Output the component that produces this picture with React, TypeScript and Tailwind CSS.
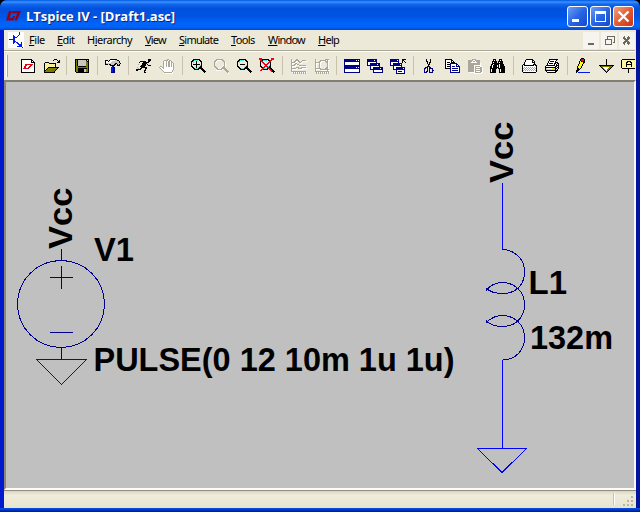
import React from "react";

const palette: Record<string, string> = {
  k: "#000000", w: "#ffffff", r: "#e80010", o: "#7b7b00", y: "#ffff00",
  l: "#fff8a0", n: "#000084", g: "#aca899", b: "#0018e8", c: "#42e8f0", s: "#c8c8c0",
};

const icons: Record<string, string[]> = {
  transistor: [
    "wwwwwwwwwwwbwwww", "wwwwwwwwwwwbwwww", "wwwwwwwwwwwbwwww", "wwwwwbwwwwbwwwww",
    "wwwwwbbwwbwwwwww", "wwwwwbbbbwwwwwww", "wwwwwbbwwwwwwwww", "wbbbbbbwwwwwwwww",
    "wwwwwbbwwwwwwwww", "wwwwwbbbwwwwwwww", "wwwwwbbwbbwwwbww", "wwwwwbwwwbbwwbww",
    "wwwwwwwwwwbbbbww", "wwwwwwwwwwwbbbww", "wwwwwwwwwbbbbbww", "wwwwwwwwwwwwwwbw",
  ],
  new: [
    "................", ".kkkkkkkkkkk....", ".kwwwwwwwwwkk...", ".kwwwwwwwwwkwk..",
    ".kwwwwwwwwwkkkk.", ".kwwwwwwwwwwwwk.", ".kwwwrrrrrrrrwk.", ".kwwwrrwwwrrwwk.",
    ".kwwrrwwwrrwwwk.", ".kwwrrwwrrwwwwk.", ".kwrrrrrrwwwwwk.", ".kwwwwwwwwwwwwk.",
    ".kwwwwwwwwwwwwk.", ".kwwwwwwwwwwwwk.", ".kkkkkkkkkkkkkk.", "................",
  ],
  open: [
    "................", "...........kkk..", "..........k...k.k", "...............kk",
    "..kkkk........kkk", ".klylykkkkkkk...", ".kylylylylylk...", ".klylylylylyk...",
    ".kylylylylylk...", ".klylkkkkkkkkkkk.", ".kylkoooooooook.", ".klkoooooooook..",
    ".kkoooooooook...", ".koooooooook....", ".kkkkkkkkkkk....", "................",
  ],
  save: [
    "................", ".kkkkkkkkkkkkkk.", ".kokssssssssksk.", ".kokssssssssokk.",
    ".kokssssssssook.", ".kokssssssssook.", ".kokssssssssook.", ".kokssssssssook.",
    ".kookkkkkkkkook.", ".kooooooooooook.", ".kookkkkkkkkkok.", ".kookkkkkkssook.",
    ".kookkkkkkssook.", ".kookkkkkkssook.", "..kkkkkkkkkkkkk.", "................",
  ],
  hammer: [
    "................", ".....kkkkkkk....", "kkk.kwwwwwsskk..", "kwwkwwwsssssssk.",
    "kwwwwwssssssssk.", "kssssssssskksssk", "kkkskkssskk.ksk.", ".....kkkkk..kkk.",
    ".......nn.......", "......bbnn......", "......bbnn......", "......bbnn......",
    "......bbnn......", "......bbnn......", "......nnnn......", "................",
  ],
  run: [
    "................", "............kkk.", "............kkk.", "....kkkkkk..kk..",
    "...k...kkkkkk...", "......kkkkk.....", "..g...kkkk.k....", ".....kkkkk..kkk.",
    "....kkkkk.......", ".g...kkkkkk.....", "..g.kk...kk.....", "kkkkk....k......",
    "kk......kk......", "........k.......", "........kk......", "................",
  ],
  hand: [
    "................", "........gg......", ".....ggggwgg....", "....gwwgwggwg...",
    "....gwwgwggwgg..", "....gwwgwggwgwg.", "....gwwgwggwgwg.", "....gwwgwggwgwg.",
    ".gg.gwwgwggwgwg.", "gwwggwwwwwwwwwg.", ".gwwgwwwwwwwwwg.", "..gwwwwwwwwwwwg.",
    "...gwwwwwwwwwg..", "....gwwwwwwwwg..", ".....ggggggggw..", "......wwwwwwww..",
  ],
  tile: [
    "................", "nnnnnnnnnnnnnnnn", "nnnnnnnnnnnnwnwn", "nnnnnnnnnnnnnnnn",
    "nwwwwwwwwwwwwwwn", "nwwwwwwwwwwwwwwn", "nwwwwwwwwwwwwwwn", "nnnnnnnnnnnnnnnn",
    "nnnnnnnnnnnnnnnn", "nnnnnnnnnnnnwnwn", "nnnnnnnnnnnnnnnn", "nwwwwwwwwwwwwwwn",
    "nwwwwwwwwwwwwwwn", "nwwwwwwwwwwwwwwn", "nnnnnnnnnnnnnnnn", "................",
  ],
  cascade: [
    "................", "nnnnnnnnnn......", "nnnnnnnwnn......", "nnnnnnnnnn......",
    "nwwwwwwwwn......", "nwwnnnnnnnnnn...", "nwwnnnnnnnwnn...", "nnnnnnnnnnnnn...",
    "...nwwwwwwwwn...", "...nwwnnnnnnnnnn", "...nwwnnnnnnnwnn", "...nnnnnnnnnnnnn",
    "......nwwwwwwwwn", "......nwwwwwwwwn", "......nnnnnnnnnn", "................",
  ],
  closeall: [
    "................", "nnnnnnnnn...kkkk", "nnnnnnnwn...kk..", "nnnnnnnnn...k.k.",
    "nwwwwwwwn...k..k", "nwwnnnnnnnnn....", "nwwnnnnnnnwn....", "nnnnnnnnnnnn....",
    "...nwwwwwwwn....", "...nwwnnnnnnnnn.", "...nwwnnnnnnnwn.", "...nnnnnnnnnnnn.",
    "......nwwwwwwwn.", "......nwnnnnwwn.", "......nwwwwwwwn.", "......nnnnnnnnn.",
  ],
  cut: [
    "................", ".....k...k......", ".....k...k......", ".....kk..k......",
    "......k.kk......", "......k.k.......", ".......kk.......", ".......k........",
    "......nkn.......", "....nnn.nn......", "...nn.n.nnnn....", "...n..n.n..n....",
    "...n..n.n..nn...", "...n.nn.n..n....", "...nnn..nnnn....", "................",
  ],
  copy: [
    "................", ".kkkkkkk........", ".kwwwwwkk.......", ".kwwwwwkwk......",
    ".kwkkkwkkkk.....", ".kwwwwnnnnnnn...", ".kwkkknwwwwwnn..", ".kwwwwnwwwwwnwn.",
    ".kwkkknwnnnwnnnn", ".kwwwwnwwwwwwwwn", ".kkkkknwnnnnnnwn", "......nwwwwwwwwn",
    "......nwnnnnnnwn", "......nwwwwwwwwn", "......nnnnnnnnnn", "................",
  ],
  paste: [
    "................", ".....gggg.......", ".gggggwwggggg...", ".ggggwggwgggg...",
    ".gggwwwwwwggg...", ".ggggggggggggw..", ".ggggggggggggw..", ".ggggggwwwwwww..",
    ".ggggggwgggggww.", ".ggggggwgwwwwggw", ".ggggggwgggggggw", ".ggggggwgwwwwggw",
    ".ggggggwgggggggw", ".ggggggwgwwwwggw", "..wwwwwwggggggww", ".......wwwwwwww.",
  ],
  find: [
    "................", "...kkk...kkk....", "...kwk...kwk....", "..kkkkk.kkkkk...",
    "..kwkkk.kwkkk...", "..kkkkkkkkkkk...", ".kkwkkkkkwkkkk..", ".kwkkkkwkwkkkk..",
    "kkwkkkkwkwkkkkk.", "kkwkkkkkkwkkkkk.", "kkkkkkk.kkkkkkk.", "kwkkkk...kwkkkk.",
    "kwkkkk...kwkkkk.", "kwkkkk...kwkkkk.", "kkkkkk...kkkkkk.", "................",
  ],
  setup: [
    "................", ".....kkkkkkk....", "....kwwwwwwkk...", "....kwwwwwwkwk..",
    "...kwwwwwwwkkk..", "...kwwwwwwwwwk..", "..kkwwwwwwwwkkk.", ".kwkkkkkkkkkkwkk",
    ".kwwwwwwwwwwwwwk", ".kwgwgwgwgwgwgwk", ".kgwgwgwgwgwgwgk", ".kwgwgwgwgwgwgwk",
    ".kgwgwgwgwgwgwgk", ".kwwwwwwwwwwwwwk", "..kkkkkkkkkkkkk.", "................",
  ],
  print: [
    "................", ".....kkkkkkkkk..", ".....kwwwwwwk...", "....kwkkkkwk....",
    "....kwwwwwwkkk..", "...kwkkkkwkkwkk.", "...kwwwwwwkwkwk.", "..kkkkkkkkkwkkk.",
    ".kwwwwwwwwwkkwk.", ".kkkkkkkkkkkwkk.", ".kswwwwwyyskkwk.", ".kssssssssskwk..",
    ".kkkkkkkkkkkkk..", "..kwwwwwwwwkk...", "...kkkkkkkkk....", "................",
  ],
  pencil: [
    "......kkk.......", ".....krrrk......", ".....krrrk......", "....kykrkk......",
    "....kyyykk......", "....kyyyk.......", "...kyyyk........", "...kyyyk........",
    "..kyyyk.........", "..kyyyk.........", "..kkyk..........", "..kkk...........",
    ".kkk............", ".kk.............", ".k.bbbbbbbbbbbb.", "................",
  ],
  ground: [
    "................", "........k.......", "........k.......", "........k.......",
    "........k.......", "........k.......", "........k.......", ".kkkkkkkkkkkkkkk",
    "..koooooooooook.", "...kowwwwwwook..", "....kowwwwook...", ".....kowwook....",
    "......kowok.....", ".......kok......", "........k.......", "................",
  ],
  label: [
    "................", ".kkkkkkkkkkkkkkk.", "kllllllllllllllk", "klllllkkkkllllllk",
    "kllllkkllkkllllk", "kllllkllllkllllk", "kllllkkkkkkllllk", "kllllkllllkllllk",
    "kllllkllllkllllk", "kllllllllllllllk", ".kkkkkkkkkkkkkkk", ".......k........",
    ".......k........", ".......k........", ".......k........", "................",
  ],
};

function PixelIcon({ name, width = 17 }: { name: string; width?: number }) {
  return (
    <svg width={width} height="16" viewBox={`0 0 ${width} 16`} shapeRendering="crispEdges" className="block shrink-0">
      {icons[name].map((row, y) =>
        row.split("").map((p, x) =>
          p === "." ? null : <rect key={`${x}-${y}`} x={x} y={y} width="1" height="1" fill={palette[p]} />,
        ),
      )}
    </svg>
  );
}

function Lens({ kind }: { kind: "in" | "pan" | "out" | "fit" }) {
  const off = kind === "pan";
  const ink = off ? "#aca899" : "#000";
  return (
    <svg width="17" height="16" viewBox="0 0 17 16" shapeRendering="crispEdges" className="block shrink-0" fill="none">
      {off && <path d="M3 12l4 1 4-3 5 6M12 4v5" stroke="#fff" />}
      <path d="M4.5 .5h4l3 3v4l-3 3h-4l-3-3v-4z" stroke={ink} transform="translate(0 .5)" />
      <path d="M3 5v-1l2-2h3" stroke={off ? "#fff" : "#42e8f0"} />
      <path d="M10 7v1l-2 2H5" stroke={off ? "#fff" : "#42e8f0"} />
      <path d="M10.5 9.5l5 5" stroke={ink} strokeWidth="2.4" />
      {kind === "in" && <path d="M3 6.5h7M6.5 3v7" stroke="#000" />}
      {kind === "out" && <path d="M4 6.5h5" stroke="#000" />}
      {kind === "fit" && <path d="M1 2l12 11M13 1L2 13M0 1h3M12 1h3" stroke="#f00010" strokeWidth="1.5" />}
    </svg>
  );
}

function Plot({ marker }: { marker?: boolean }) {
  const curve = marker
    ? "M2.5 1v13M2 13.5h14M3 4.5h4M3 10.5h4M8 2.5h4l2 2v5l-2 2h-4l-2-2v-5zM14.5 1v12M12 1.5h4M12 11.5h4"
    : "M1.5 1v13M1 13.5h15M2 4.5h2l3-3 3 3 3-2h3M2 7.5h2l2-2 4 2h6M2 10.5h3l2-1 3 1 3-1h3";
  const ticks = "M3.5 14v2M5.5 14v2M7.5 14v2M9.5 14v2M11.5 14v2M13.5 14v2M15.5 14v2";
  return (
    <svg width="17" height="16" viewBox="0 0 17 16" shapeRendering="crispEdges" className="block shrink-0" fill="none">
      <path d={curve} stroke="#fff" transform="translate(1 1)" />
      <path d={curve + ticks} stroke="#aca899" />
    </svg>
  );
}

const toolbar = [
  "new", "open", "|", "save", "|", "hammer", "|", "run", "hand", "|",
  "lens-in", "lens-pan", "lens-out", "lens-fit", "|", "plot", "plot-marker", "|",
  "tile", "cascade", "closeall", "|", "cut", "copy", "paste", "find", "|",
  "setup", "print", "|", "pencil", "ground", "label",
];

function ToolIcon({ name }: { name: string }) {
  if (name === "lens-in") return <Lens kind="in" />;
  if (name === "lens-pan") return <Lens kind="pan" />;
  if (name === "lens-out") return <Lens kind="out" />;
  if (name === "lens-fit") return <Lens kind="fit" />;
  if (name === "plot") return <Plot />;
  if (name === "plot-marker") return <Plot marker />;
  return <PixelIcon name={name} />;
}

const menus = [
  { before: "", key: "F", after: "ile", box: "w-[28px]", type: "tracking-[-0.45px]" },
  { before: "", key: "E", after: "dit", box: "w-[30px]", type: "tracking-[-0.6px]" },
  { before: "H", key: "i", after: "erarchy", box: "w-[58px]", type: "tracking-[-0.5px]" },
  { before: "", key: "V", after: "iew", box: "w-[34px]", type: "tracking-[-0.8px]" },
  { before: "", key: "S", after: "imulate", box: "w-[52px]", type: "tracking-[-0.75px]" },
  { before: "", key: "T", after: "ools", box: "w-[37px]", type: "tracking-[-0.6px]" },
  { before: "", key: "W", after: "indow", box: "w-[50px]", type: "tracking-[-0.8px]" },
  { before: "", key: "H", after: "elp", box: "w-[30px]", type: "tracking-[-0.7px]" },
];

function TitleButton({ kind }: { kind: "min" | "max" | "close" }) {
  const fill = kind === "close"
    ? "bg-linear-to-br from-[#f0a080] via-[#e35b32] to-[#c83210]"
    : "bg-linear-to-br from-[#6c9df5] via-[#2865e5] to-[#1548cc]";
  return (
    <div className={`h-[21px] w-[21px] rounded-[3px] border border-white ${fill}`}>
      <svg width="19" height="19" viewBox="0 0 19 19" fill="none" stroke="#fff" shapeRendering={kind === "close" ? "auto" : "crispEdges"}>
        {kind === "min" && <path d="M4 13.5h7" strokeWidth="3" />}
        {kind === "max" && <><path d="M4 5.5h11" strokeWidth="3" /><path d="M4.5 5v9.5h10V5" /></>}
        {kind === "close" && <path d="M4.5 4.5l10 10M14.5 4.5l-10 10" strokeWidth="2.3" />}
      </svg>
    </div>
  );
}

function Schematic() {
  return (
    <svg width="628" height="406" viewBox="6 82 628 406" fill="none" className="block bg-[#c0c0c0]">
      <g shapeRendering="crispEdges" stroke="#000090">
        <circle cx="61" cy="304" r="43.5" />
        <path d="M61.5 249v11M61.5 266v23M50 277.5h23M50 332.5h23M61.5 348v12" />
        <path d="M502.5 249.5C515 250 524.5 259 524.5 271.5C524.5 286 515 293.5 502.5 293.5C495 293.5 489 291 486 288" />
        <path d="M486 290.5C490 285.5 496 282.5 502.5 282.5C515 282.5 524.5 292 524.5 304.5C524.5 318 515 326.5 502.5 326.5C495 326.5 489 324 486 320.5" />
        <path d="M486 323C490 318.5 496 315.5 502.5 315.5C515 315.5 524.5 325 524.5 337.5C524.5 351 515 360 502.5 360" />
      </g>
      <g shapeRendering="crispEdges" stroke="#0000ff">
        <path d="M36.5 359.5h50l-25 25zM502.5 183v66M502.5 360v88M477.5 448.5h49l-24.5 24z" />
      </g>
      <g fill="#000" fontFamily="Liberation Sans, Arial, sans-serif" fontWeight="700" fontSize="34">
        <text x="94" y="261" textLength="40" lengthAdjust="spacingAndGlyphs">V1</text>
        <text x="93.5" y="371" textLength="361" lengthAdjust="spacingAndGlyphs">PULSE(0 12 10m 1u 1u)</text>
        <text x="528.5" y="294" textLength="38.5" lengthAdjust="spacingAndGlyphs">L1</text>
        <text x="530" y="349" textLength="83" lengthAdjust="spacingAndGlyphs">132m</text>
        <text transform="translate(72 249) rotate(-90)" textLength="61.5" lengthAdjust="spacingAndGlyphs">Vcc</text>
        <text transform="translate(513 183) rotate(-90)" textLength="61.5" lengthAdjust="spacingAndGlyphs">Vcc</text>
      </g>
    </svg>
  );
}

export default function App() {
  return (
    <div className="h-[512px] w-[640px] overflow-hidden bg-black">
      <div className="flex h-full flex-col overflow-hidden rounded-t-[7px] bg-linear-to-r from-[#0019cf] via-[#0848e8] via-50% to-[#0014a0]">
        <header className="flex h-[30px] shrink-0 items-center bg-[linear-gradient(180deg,#0058e0_0%,#3a93ff_7%,#1668ee_13%,#0052dc_28%,#0054e4_55%,#0064fb_78%,#0063f8_90%,#0047cd_100%)] pt-px pr-[6px] pl-[6px]">
          <svg width="16" height="16" viewBox="0 0 16 16" fill="#90001c" className="mr-[4px] shrink-0">
            <path d="M3 3h3L3.5 10H6l1.2-2h2L7.5 12.5H0zM6.5 3H15L11 12.5H8.5L11.2 5.3H5.8z" />
          </svg>
          <h1 className="flex-1 font-['Open_Sans',sans-serif] text-[13px] leading-[18px] font-bold tracking-[-0.03px] whitespace-pre text-white [text-shadow:1px_1px_0_#0a2680]">LTspice IV - [Draft1.asc]</h1>
          <div className="flex gap-[2px] pt-px">
            <TitleButton kind="min" /><TitleButton kind="max" /><TitleButton kind="close" />
          </div>
        </header>

        <div className="mx-[4px] flex min-h-0 flex-1 flex-col bg-[#ece9d8]">
          <nav className="flex h-[20px] shrink-0 items-center font-['Noto_Sans',sans-serif] text-[11px] leading-[14px] text-black">
            <div className="mr-[5px] ml-[4px] shrink-0"><PixelIcon name="transistor" width={16} /></div>
            {menus.map((m) => (
              <span key={m.before + m.key + m.after} className={`${m.box} ${m.type} shrink-0 whitespace-nowrap`}>
                {m.before}<span className="underline underline-offset-1">{m.key}</span>{m.after}
              </span>
            ))}
            <div className="mr-px ml-auto flex gap-[2px]">
              {["M5 11.5h6", "M6.5 7V4M6 4.5h8M13.5 4v6h-2M4.5 7v5.5h6V7M4 7.5h7", "M4.5 5l6 7M10.5 5l-6 7"].map((d, i) => (
                <div key={d} className="h-[17px] w-[16px] bg-[#f5f4ee]">
                  <svg width="16" height="17" viewBox="0 0 16 17" fill="none" stroke="#6b6959" strokeWidth={i === 1 ? 1 : i === 2 ? 2.4 : 2} shapeRendering="crispEdges"><path d={d} />{i === 1 && <path d="M6 4h8M4 7h7" />}</svg>
                </div>
              ))}
            </div>
          </nav>

          <div className="mr-px flex h-[30px] shrink-0 items-center overflow-hidden border-t border-[#aca899] pl-[2px] shadow-[inset_0_1px_0_#fff]">
            <i className="mr-[9px] h-[22px] w-[2px] shrink-0 border-r border-[#aca899] bg-white" />
            {toolbar.map((name, i) =>
              name === "|" ? (
                <i key={i} className="mr-[4px] ml-[3px] h-[19px] w-px shrink-0 bg-[#c6c2ae]" />
              ) : (
                <div key={i} className="h-[16px] w-[23px] shrink-0 pl-[3px]"><ToolIcon name={name} /></div>
              ),
            )}
          </div>

          <main className="h-[410px] shrink-0 border-t-2 border-r-2 border-b-2 border-l-2 border-t-[#817e70] border-r-[#f8f7f0] border-b-[#fdfcf5] border-l-[#8a8779]">
            <Schematic />
          </main>

          <footer className="flex h-[18px] shrink-0 justify-end border-t border-[#918e80] bg-linear-to-b from-[#d9d6c4] via-[#efecdd] via-25% to-[#e6e3cd]">
            <i className="mt-[2px] mr-[8px] h-[12px] w-[2px] border-r border-white bg-[#c5c2b0]" />
            <svg width="12" height="17" viewBox="0 0 12 17" fill="#b8b4a1" shapeRendering="crispEdges" className="mr-px">
              <path d="M8 5h2v2H8zM4 9h2v2H4zM8 9h2v2H8zM0 13h2v2H0zM4 13h2v2H4zM8 13h2v2H8z" />
            </svg>
          </footer>
        </div>
        <div className="h-[4px] shrink-0 bg-linear-to-b from-[#0855ed] to-[#001390]" />
      </div>
    </div>
  );
}
